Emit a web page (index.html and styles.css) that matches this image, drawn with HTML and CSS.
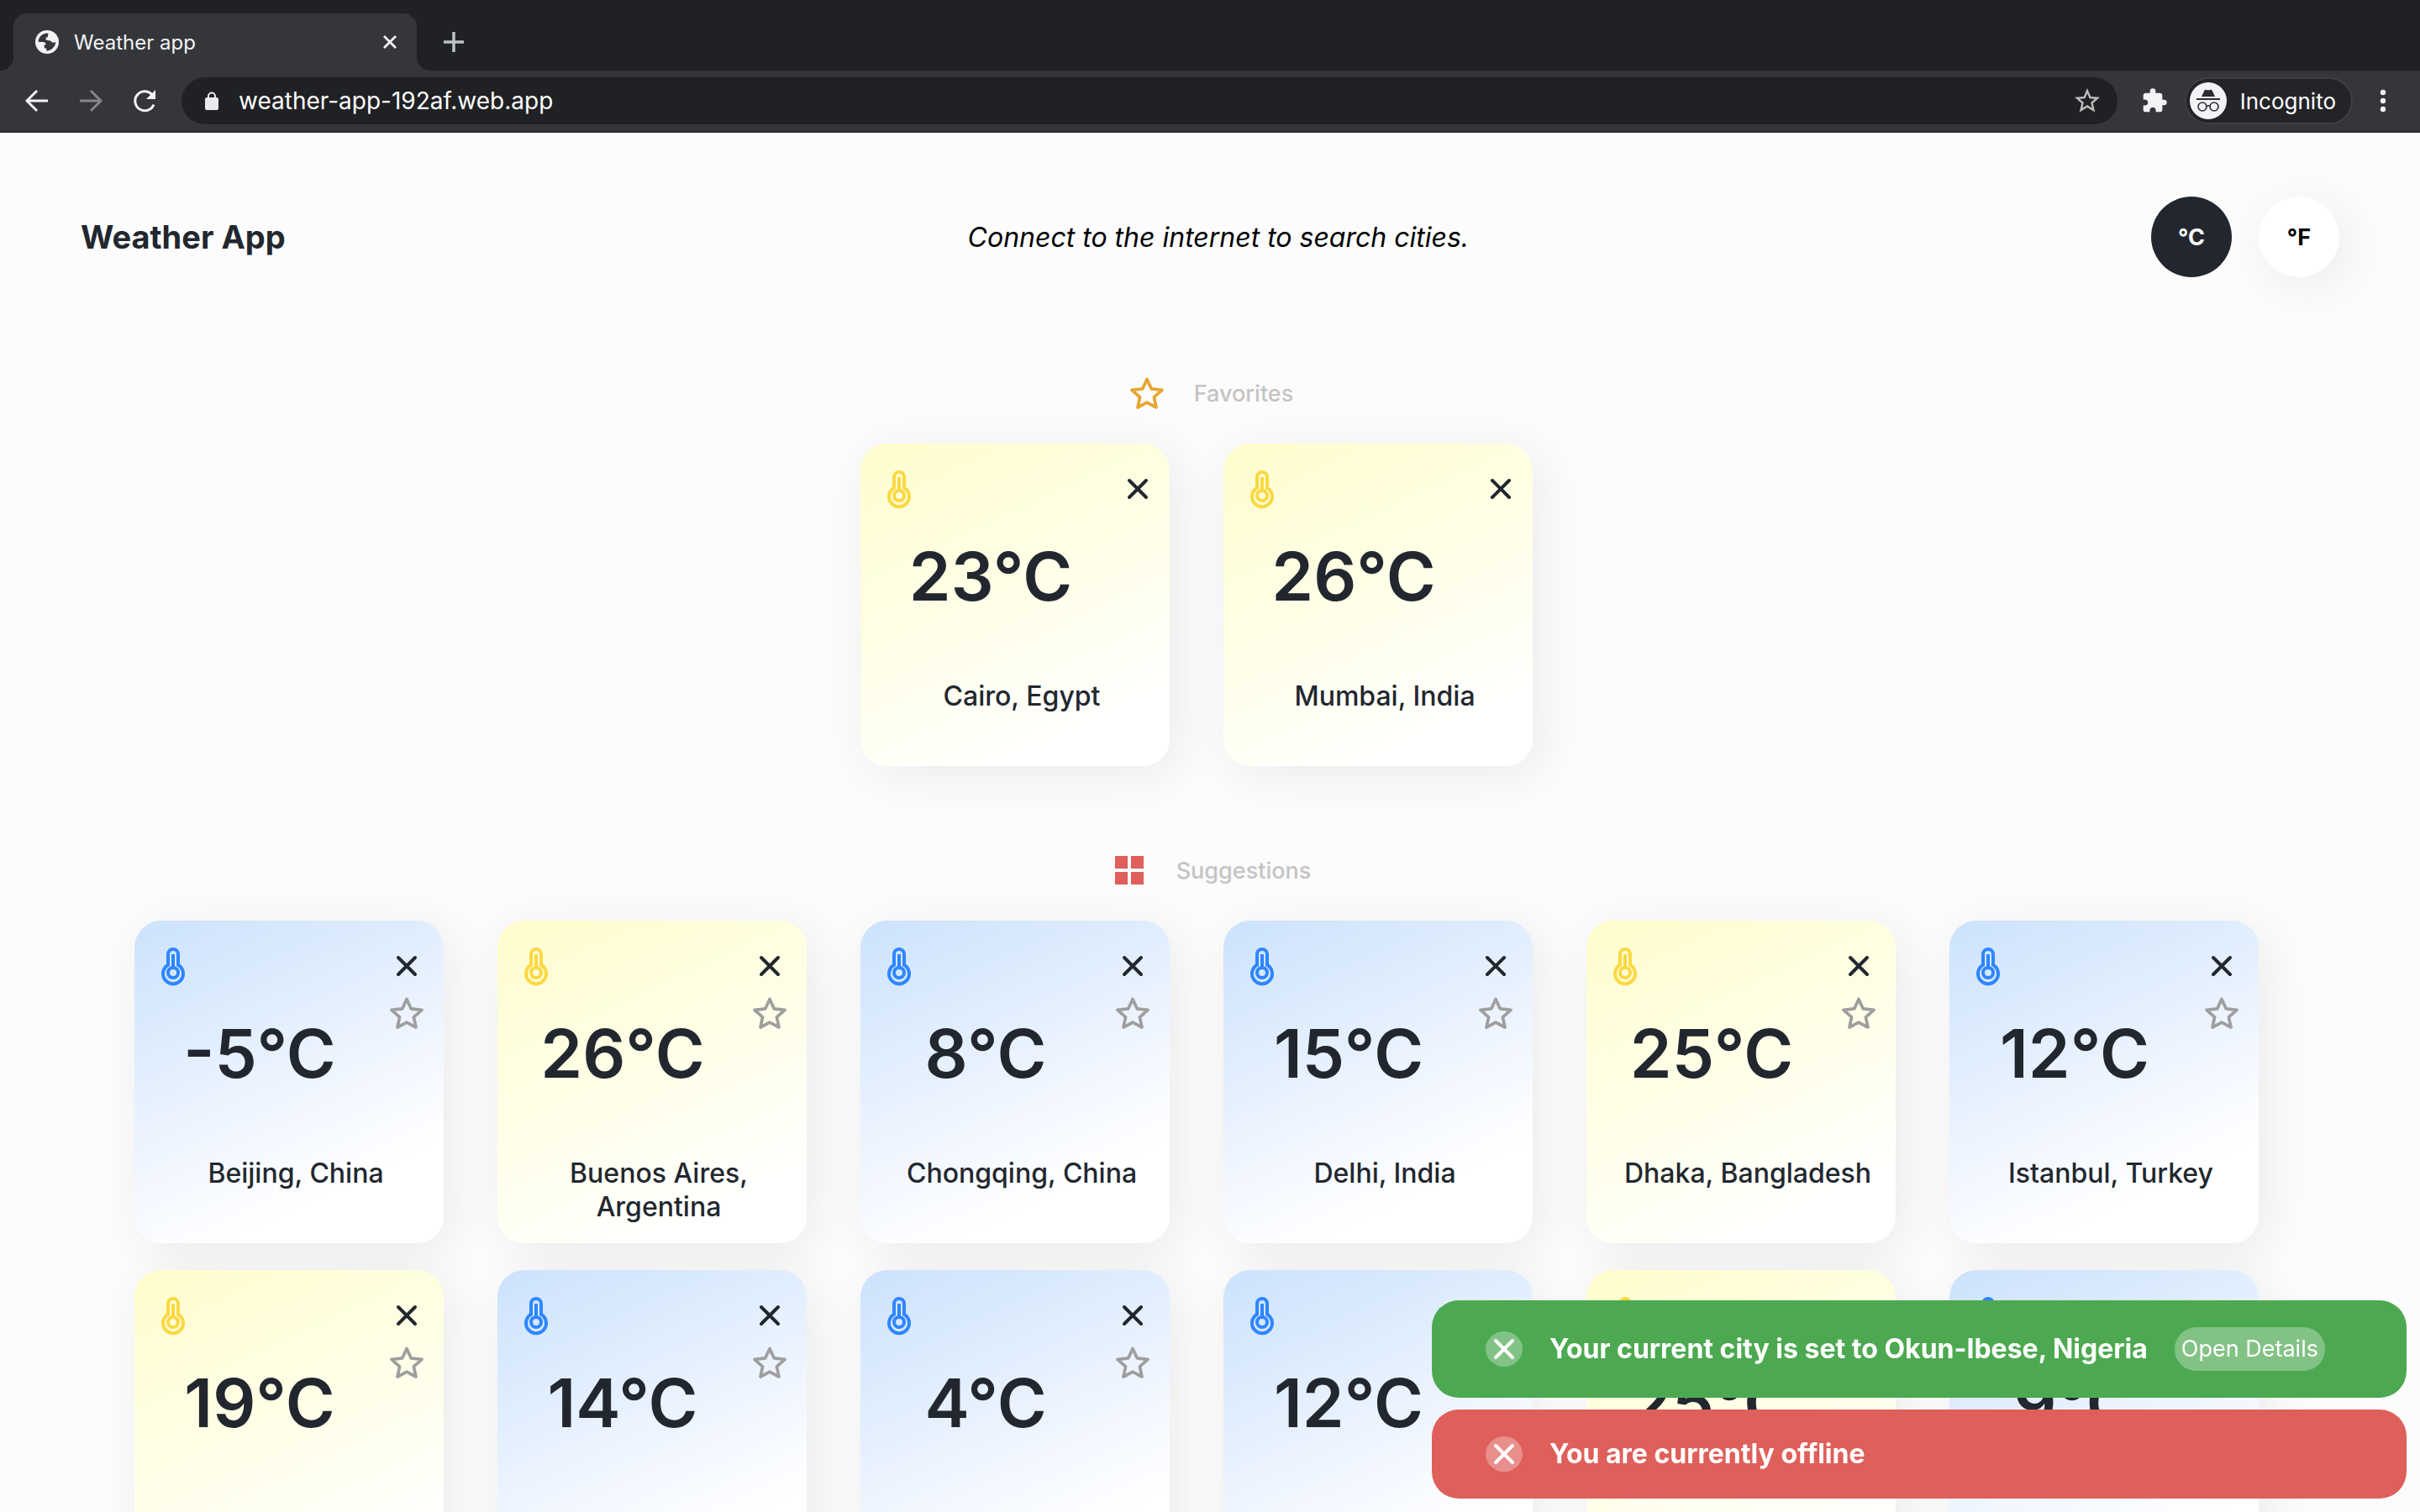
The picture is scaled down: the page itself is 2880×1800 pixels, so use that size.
FILE: index.html
```html
<!DOCTYPE html>
<html lang="en">
<head>
<meta charset="utf-8">
<title>Weather app</title>
<link rel="stylesheet" href="styles.css">
<script src="app.js" defer></script>
</head>
<body>
<svg class="sprite" aria-hidden="true">
  <symbol id="thermometer" viewBox="0 0 24 24">
    <path d="M9 5a3 3 0 0 1 6 0v6.4a6 6 0 1 1-6 0z" fill="none" stroke="currentColor" stroke-width="2"/>
    <circle cx="12" cy="16" r="3" fill="none" stroke="currentColor" stroke-width="2"/>
    <path d="M12 5v8" stroke="currentColor" stroke-width="2"/>
  </symbol>
  <symbol id="close" viewBox="0 0 24 24">
    <path d="M7 7l10 10M17 7L7 17" fill="none" stroke="currentColor" stroke-width="2" stroke-linecap="round"/>
  </symbol>
  <symbol id="star" viewBox="0 0 48 48">
    <path d="M24 7.5L29.2 18.8L42 20.3L32.4 28.8L35 41L24 35.2L13 41L15.6 28.8L6 20.3L18.8 18.8Z" fill="none" stroke="currentColor" stroke-width="3.7" stroke-linejoin="round"/>
  </symbol>
</svg>

<div class="browser">
  <div class="tab-strip">
    <div class="tab">
      <svg class="tab-globe" viewBox="0 0 28 28"><circle cx="14" cy="14" r="14" fill="#f1f3f4"/><path d="M14 3.500c-5.500 .2-10.200 4.600-10.500 10.300l6 .2c2 0 3.200 1.300 3.200 3.200h-2v3c0 1.300 1.300 1.300 2.600 1.300v3c3.500 0 6.500-1.500 8.500-4.200 1.700-2.200 2.400-4.300 2.400-6.300-1.500.7-3.200.9-4.700.3-.6-1.600-1.900-2.100-3.900-2.100-1.500 0-3-.2-3.200-1.600-.2-1.900 1-2.700 2.600-2.700 0-1.500-.2-2.800.7-3.600z" fill="#35363a"/></svg>
      <span class="tab-title">Weather app</span>
      <button class="plain tab-close" aria-label="Close tab"><svg viewBox="0 0 16 16"><path d="M1 1l14 14M15 1L1 15" stroke="currentColor" stroke-width="2.800" /></svg></button>
    </div>
    <button class="plain new-tab" aria-label="New tab"><svg viewBox="0 0 24 24"><path d="M12 0v24M0 12h24" stroke="currentColor" stroke-width="3.500"/></svg></button>
  </div>
  <div class="toolbar">
    <button class="plain nav" aria-label="Back"><svg viewBox="0 0 32 32"><path d="M29 16H5M16 4L4 16l12 12" fill="none" stroke="currentColor" stroke-width="2.900"/></svg></button>
    <button class="plain nav nav-off" aria-label="Forward"><svg viewBox="0 0 32 32"><path d="M3 16h24M16 4l12 12-12 12" fill="none" stroke="currentColor" stroke-width="2.900"/></svg></button>
    <button class="plain nav" aria-label="Reload"><svg viewBox="0 0 32 32"><path d="M27 20.500A11.500 11.500 0 1 1 24.500 8.200" fill="none" stroke="currentColor" stroke-width="3"/><path d="M29 3v11H18z" fill="currentColor"/></svg></button>
    <div class="omnibox">
      <svg class="lock" viewBox="0 0 16 22"><path d="M4 9V5.500a4 4 0 0 1 8 0V9" fill="none" stroke="#e8eaed" stroke-width="2"/><rect y="7" width="16" height="15" rx="2" fill="#e8eaed"/></svg>
      <input class="url" type="text" aria-label="Address" value="weather-app-192af.web.app">
      <button class="plain bookmark" aria-label="Bookmark this page"><svg viewBox="0 0 24 24"><path d="M22 9.240l-7.190-.62L12 2 9.190 8.630 2 9.240l5.460 4.730L5.820 21 12 17.270 18.180 21l-1.630-7.030L22 9.240zM12 15.400l-3.760 2.270 1-4.280-3.320-2.880 4.380-.38L12 6.100l1.710 4.040 4.380.38-3.320 2.880 1 4.280L12 15.400z" fill="currentColor"/></svg></button>
    </div>
    <button class="plain extensions" aria-label="Extensions"><svg viewBox="0 0 24 24"><path d="M20.500 11H19V7c0-1.100-.9-2-2-2h-4V3.500a2.500 2.500 0 0 0-5 0V5H4c-1.100 0-1.990.9-1.990 2v3.800H3.500c1.490 0 2.700 1.210 2.700 2.700s-1.210 2.700-2.700 2.700H2V20c0 1.100.9 2 2 2h3.800v-1.500c0-1.490 1.210-2.700 2.700-2.700s2.700 1.210 2.700 2.700V22H17c1.100 0 2-.9 2-2v-4h1.500a2.500 2.500 0 0 0 0-5z" fill="currentColor"/></svg></button>
    <button class="plain incognito">
      <svg viewBox="0 0 44 44"><circle cx="22" cy="22" r="22" fill="#f1f3f4"/><path d="M14 17l3.500-7.500c.4-.8 1-1 1.800-.8l2.700.8 2.700-.8c.8-.2 1.400 0 1.800.8L30 17z" fill="#2b2c30"/><path d="M8 20h28" stroke="#2b2c30" stroke-width="2"/><g fill="none" stroke="#2b2c30" stroke-width="1.600"><circle cx="15" cy="29" r="5"/><circle cx="29" cy="29" r="5"/><path d="M20 28.500q2-1.500 4 0"/></g></svg>
      <span>Incognito</span>
    </button>
    <button class="plain menu" aria-label="Menu"><svg viewBox="0 0 8 28"><g fill="currentColor"><circle cx="4" cy="4" r="3.200"/><circle cx="4" cy="14" r="3.200"/><circle cx="4" cy="24" r="3.200"/></g></svg></button>
  </div>
</div>

<main class="app">
  <header class="header">
    <h1 class="brand">Weather App</h1>
    <p class="hint">Connect to the internet to search cities.</p>
    <div class="units">
      <button class="plain unit unit-on">°C</button>
      <button class="plain unit">°F</button>
    </div>
  </header>

  <section class="group">
    <h2 class="group-title"><svg class="icon gold"><use href="#star"/></svg>Favorites</h2>
    <div class="cards" id="favorites"></div>
  </section>

  <section class="group">
    <h2 class="group-title"><svg class="icon red" viewBox="0 0 48 48"><path d="M7 7h15v15H7zM26 7h15v15H26zM7 26h15v15H7zM26 26h15v15H26z" fill="currentColor"/></svg>Suggestions</h2>
    <div class="cards" id="suggestions"></div>
  </section>
</main>

<div class="toasts">
  <div class="toast toast-success" role="status">
    <button class="plain toast-close" aria-label="Dismiss"><svg class="icon"><use href="#close"/></svg></button>
    <span>Your current city is set to Okun-Ibese, Nigeria</span>
    <button class="plain details">Open Details</button>
  </div>
  <div class="toast toast-error" role="alert">
    <button class="plain toast-close" aria-label="Dismiss"><svg class="icon"><use href="#close"/></svg></button>
    <span>You are currently offline</span>
  </div>
</div>
</body>
</html>
```
FILE: app.js
```js
const favorites = [[23, "Cairo, Egypt"], [26, "Mumbai, India"]];
const suggestions = [
  [-5, "Beijing, China"], [26, "Buenos Aires, Argentina"], [8, "Chongqing, China"],
  [15, "Delhi, India"], [25, "Dhaka, Bangladesh"], [12, "Istanbul, Turkey"],
  [19, ""], [14, ""], [4, ""], [12, ""], [25, ""], [9, ""]
];

function card([temp, city], starred) {
  // Anything above 15 degrees counts as warm.
  const tone = temp > 15 ? "warm" : "cold";
  const star = starred ? "" :
    '<button class="plain action action-star" aria-label="Add to favorites"><svg class="icon"><use href="#star"/></svg></button>';
  return `<article class="card ${tone}">
    <div class="card-top">
      <div class="reading">
        <svg class="icon thermometer"><use href="#thermometer"/></svg>
        <p class="temp">${temp}°C</p>
      </div>
      <div class="actions ${starred ? "actions-narrow" : ""}">
        <button class="plain action" aria-label="Remove"><svg class="icon"><use href="#close"/></svg></button>
        ${star}
      </div>
    </div>
    <p class="city">${city}</p>
  </article>`;
}

document.getElementById("favorites").innerHTML = favorites.map(c => card(c, true)).join("");
document.getElementById("suggestions").innerHTML = suggestions.map(c => card(c, false)).join("");
```
FILE: styles.css
```css
* { box-sizing: border-box; }

body {
  margin: 0;
  height: 100vh;
  display: flex;
  flex-direction: column;
  background: #fcfcfc;
  color: #22272f;
  font-family: Inter, "Liberation Sans", sans-serif;
  overflow: hidden;
}

h1, h2, p { margin: 0; }
svg { display: block; }
.sprite { display: none; }
.icon { width: 48px; height: 48px; flex: none; }

.plain {
  padding: 0;
  border: 0;
  background: none;
  color: inherit;
  font: inherit;
  display: flex;
  align-items: center;
  justify-content: center;
  flex: none;
}

/* Browser frame */
.browser { flex: none; background: #35363a; color: #f1f3f4; border-bottom: 2px solid #28292c; }
.tab-strip { display: flex; height: 84px; padding: 16px 16px 0; background: #202124; }
.tab {
  position: relative;
  display: flex;
  align-items: center;
  width: 480px;
  padding: 0 24px 0 26px;
  border-radius: 16px 16px 0 0;
  background: #35363a;
  font-size: 24px;
}
.tab::before, .tab::after {
  content: "";
  position: absolute;
  bottom: 0;
  width: 16px;
  height: 16px;
}
.tab::before { right: 100%; background: radial-gradient(circle at 0 0, #202124 16px, #35363a 16px); }
.tab::after { left: 100%; background: radial-gradient(circle at 100% 0, #202124 16px, #35363a 16px); }
.tab-globe { width: 28px; height: 28px; }
.tab-title { flex: 1; margin-left: 18px; }
.tab-close svg { width: 16px; height: 16px; }
.new-tab { width: 24px; margin-left: 32px; color: #bdc1c6; }
.new-tab svg { width: 24px; height: 24px; }

.toolbar { display: flex; align-items: center; height: 72px; padding: 0 24px 0 28px; }
.nav { width: 32px; margin-right: 32px; }
.nav svg { width: 32px; height: 32px; }
.nav-off { color: #85868a; }
.omnibox {
  flex: 1;
  display: flex;
  align-items: center;
  height: 56px;
  margin: 0 28px 0 -4px;
  padding: 0 18px 0 28px;
  border-radius: 28px;
  background: #202124;
}
.lock { width: 16px; height: 22px; }
.url {
  flex: 1;
  margin-left: 24px;
  padding: 0;
  border: 0;
  background: none;
  color: #fff;
  font: 28px Inter, "Liberation Sans", sans-serif;
}
.bookmark { color: #bdbdbd; }
.bookmark svg { width: 36px; height: 36px; }
.extensions svg { width: 32px; height: 32px; }
.incognito {
  height: 56px;
  width: 200px;
  margin-left: 20px;
  padding: 0 18px 0 4px;
  justify-content: space-between;
  border: 2px solid #3f4044;
  border-radius: 28px;
  background: #242428;
  color: #fff;
  font-size: 26px;
}
.incognito svg { width: 44px; height: 44px; }
.menu { width: 8px; margin: 0 16px 0 32px; }
.menu svg { width: 8px; height: 28px; }

/* Page header */
.app { flex: 1; min-height: 0; overflow: auto; scrollbar-width: none; }
.header {
  display: flex;
  align-items: center;
  justify-content: space-between;
  padding: 76px 96px 0;
}
.brand { font-size: 38px; font-weight: 700; }
.hint { color: #000; font-size: 32px; font-style: italic; }
.units { display: flex; gap: 32px; }
.unit {
  width: 96px;
  height: 96px;
  border-radius: 50%;
  background: #fff;
  box-shadow: 10px 10px 60px rgba(0, 0, 0, 0.07);
  color: #000;
  font-size: 27px;
  font-weight: 700;
}
.unit-on { background: #22272f; box-shadow: none; color: #fff; }

/* City groups */
.group { padding-top: 100px; }
.header + .group { padding-top: 114px; }
.group-title {
  display: flex;
  align-items: center;
  justify-content: center;
  gap: 32px;
  margin-bottom: 36px;
  color: #c4c4c4;
  font-size: 27px;
  font-weight: 500;
}
.gold { color: #e6a532; }
.red { color: #df5f5a; }
.cards {
  display: flex;
  flex-wrap: wrap;
  justify-content: center;
  gap: 32px 64px;
  margin-right: 32px;
}
.card {
  width: 368px;
  height: 384px;
  padding: 30px 20px 0 0;
  border-radius: 32px;
  box-shadow: 10px 10px 60px rgba(0, 0, 0, 0.07);
}
.warm { background: linear-gradient(155deg, #fffccb, #fffedf 30%, #fffff0 60%, #fff 85%); }
.cold { background: linear-gradient(155deg, #cce2fc, #dfedfd 30%, #eff5ff 52%, #fff 78%); }
.card-top { display: flex; height: 168px; }
.reading { flex: 1; }
.thermometer { margin-left: 22px; }
.warm .thermometer { color: #fbd843; }
.cold .thermometer { color: #2f86ff; }
.temp {
  margin: 40px 2px 0 0;
  font-size: 80px;
  font-weight: 600;
  line-height: 80px;
  text-align: center;
}
.actions { display: flex; flex-direction: column; gap: 8px; width: 48px; }
.actions-narrow { width: 36px; }
.action { height: 48px; }
.action-star { color: #9e9e9e; }
.city {
  margin-top: 83px;
  padding-left: 36px;
  font-size: 32px;
  font-weight: 500;
  line-height: 40px;
  text-align: center;
}

/* Notifications over the page */
.toasts {
  position: fixed;
  right: 16px;
  bottom: 16px;
  display: grid;
  gap: 14px;
  width: 1160px;
  max-width: calc(100% - 32px);
}
.toast {
  display: flex;
  align-items: center;
  gap: 32px;
  padding: 32px 64px;
  border-radius: 32px;
  color: #fff;
  font-size: 32px;
  font-weight: 700;
  line-height: 42px;
}
.toast-success { background: #4da951; }
.toast-error { background: #df5f5a; }
.toast-close { width: 44px; height: 42px; border-radius: 50%; background: rgba(255, 255, 255, 0.3); }
.details {
  height: 52px;
  padding: 0 8px;
  border-radius: 26px;
  background: rgba(255, 255, 255, 0.3);
  font-size: 27px;
  font-weight: 400;
}
```
